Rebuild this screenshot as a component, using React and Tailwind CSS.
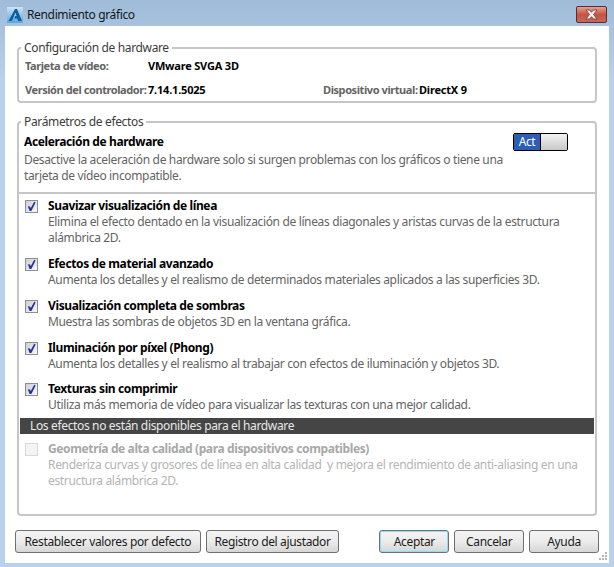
const Check = ({ disabled }) => (
  <div className={`w-[13px] h-[13px] shrink-0 border flex items-center justify-center ${disabled ? "border-[#d8d8d8] bg-[#f4f4f4]" : "border-[#8e8f8f] bg-gradient-to-br from-[#cfcfd4] to-[#f8f8f8]"}`}>
    {!disabled && (
      <svg width="11" height="11" viewBox="0 0 11 11">
        <path d="M1.8 5.2 L4 5.6 L4.8 7 L8.2 0.8 L9.6 1.4 L5.4 10 L3.6 10 Z" fill="#2a3496" />
      </svg>
    )}
  </div>
);

const Effect = ({ title, children, disabled, className = "" }) => (
  <div className={`flex ${className}`}>
    <div className="w-[29px] pl-[6px] pt-[2px] shrink-0">
      <Check disabled={disabled} />
    </div>
    <div>
      <div className={`font-bold h-[16px] leading-[16px] tracking-[-0.38px] ${disabled ? "text-[#a8a8a8]" : "text-black"}`}>{title}</div>
      <div className={`leading-[16px] ${disabled ? "text-[#b4b4b4]" : "text-[#646464]"}`}>{children}</div>
    </div>
  </div>
);

const Btn = ({ children, className = "" }) => (
  <button className={`h-[23px] rounded-[3px] border border-[#707070] bg-gradient-to-b from-[#f4f4f4] via-[#ebebeb] to-[#d6d6d6] text-[#1c1c1c] text-center whitespace-nowrap ${className}`}>
    {children}
  </button>
);

export default function App() {
  return (
    <div className="relative w-[614px] h-[567px] bg-[#b9d1ea] bg-gradient-to-b from-[#9fbbd8] from-0% to-[#b9d1ea] to-[14%] flex flex-col text-[12px] overflow-hidden font-['Noto_Sans','Open_Sans',sans-serif] tracking-[-0.35px]">
      <div className="h-[26px] shrink-0 flex items-center relative pl-[7px]">
        <svg width="16" height="16" viewBox="0 0 16 16" className="shrink-0 mt-[4px]">
          <defs>
            <linearGradient id="ic" x1="0" y1="0" x2="0" y2="1">
              <stop offset="0" stopColor="#cfe3f3" />
              <stop offset="1" stopColor="#5aa6dc" />
            </linearGradient>
          </defs>
          <rect width="16" height="16" fill="url(#ic)" />
          <path d="M8 2 L10 2 L15 14 L11 14 L10.3 11.5 L7.4 11.5 L8.2 9 L9.6 9 L8.4 5.5 L5 14 L1.5 14 Z" fill="#0f5f9e" />
        </svg>
        <span className="ml-[4px] mt-[3px] text-[#101820]">Rendimiento gráfico</span>
        <div className="absolute left-[576px] top-[6px] w-[31px] h-[17px] rounded-[2px] border border-[#5e2a2e] bg-gradient-to-b from-[#dfa094] via-[#c8533f] to-[#bf6a5e] flex items-center justify-center">
          <svg width="15" height="11" viewBox="0 0 15 11">
            <path d="M2 1 L5.5 1 L7.5 3.3 L9.5 1 L13 1 L9.5 5.5 L13 10 L9.5 10 L7.5 7.7 L5.5 10 L2 10 L5.5 5.5 Z" fill="#f1f1f1" stroke="#6b3a38" strokeWidth="0.8" />
          </svg>
        </div>
      </div>

      <div className="w-[604px] h-[537px] ml-[5px] bg-white flex flex-col px-[12px] shrink-0">
        <fieldset className="w-[580px] h-[63px] mt-[14px] border-2 border-[#c6c6c6] rounded-[4px] shrink-0">
          <legend className="ml-[2px] px-[3px] text-[#3c3c3c] leading-[16px]">Configuración de hardware</legend>
          <div className="flex font-bold text-[#646464] text-[11px] h-[16px] leading-[16px] mt-[2px] pl-[6px] whitespace-nowrap tracking-[-0.2px]">
            <span className="w-[123px] tracking-[-0.42px]">Tarjeta de vídeo:</span>
            <span className="text-black">VMware SVGA 3D</span>
          </div>
          <div className="flex font-bold text-[#646464] text-[11px] h-[16px] leading-[16px] mt-[8px] pl-[6px] whitespace-nowrap tracking-[-0.2px]">
            <span className="w-[123px] tracking-[-0.42px]">Versión del controlador:</span>
            <span className="text-black w-[175px]">7.14.1.5025</span>
            <span className="w-[96px] tracking-[-0.42px]">Dispositivo virtual:</span>
            <span className="text-black">DirectX 9</span>
          </div>
        </fieldset>

        <fieldset className="w-[580px] h-[402px] mt-[11px] border-2 border-[#c6c6c6] rounded-[4px] shrink-0">
          <legend className="ml-[2px] px-[3px] text-[#3c3c3c] leading-[16px]">Parámetros de efectos</legend>
          <div className="px-[5px] pt-[4px] h-[64px] border-b-2 border-[#c6c6c6] relative">
            <div className="font-bold text-black leading-[16px] tracking-[-0.38px]">Aceleración de hardware</div>
            <div className="text-[#646464] leading-[16px] mt-[2px] w-[490px]">
              Desactive la aceleración de hardware solo si surgen problemas con los gráficos o tiene una tarjeta de vídeo incompatible.
            </div>
            <div className="absolute left-[494px] top-[3px] w-[55px] h-[18px] rounded-[2px] border border-black flex overflow-hidden">
              <div className="w-[27px] bg-[#2c5fb4] text-white text-center leading-[16px] border-r border-black">Act</div>
              <div className="flex-1 bg-gradient-to-b from-[#f2f2f2] to-[#c8c8c8]" />
            </div>
          </div>
          <Effect title="Suavizar visualización de línea" className="mt-[4px]">
            Elimina el efecto dentado en la visualización de líneas diagonales y aristas curvas de la estructura<br />alámbrica 2D.
          </Effect>
          <Effect title="Efectos de material avanzado" className="mt-[10px]">
            Aumenta los detalles y el realismo de determinados materiales aplicados a las superficies 3D.
          </Effect>
          <Effect title="Visualización completa de sombras" className="mt-[10px]">
            Muestra las sombras de objetos 3D en la ventana gráfica.
          </Effect>
          <Effect title="Iluminación por píxel (Phong)" className="mt-[10px]">
            Aumenta los detalles y el realismo al trabajar con efectos de iluminación y objetos 3D.
          </Effect>
          <Effect title="Texturas sin comprimir" className="mt-[9px]">
            Utiliza más memoria de vídeo para visualizar las texturas con una mejor calidad.
          </Effect>
          <div className="h-[16px] bg-[#454545] text-[#e8e8e8] leading-[16px] pl-[10px] mt-[5px] mx-[1px]">
            Los efectos no están disponibles para el hardware
          </div>
          <Effect title="Geometría de alta calidad (para dispositivos compatibles)" disabled className="mt-[7px]">
            <span className="tracking-[-0.32px]">Renderiza curvas y grosores de línea en alta calidad{"\u00a0"} y mejora el rendimiento de anti-aliasing en una</span><br />estructura alámbrica 2D.
          </Effect>
        </fieldset>

        <div className="flex mt-[14px] -ml-[2px] w-[584px]">
          <Btn className="w-[186px]">Restablecer valores por defecto</Btn>
          <Btn className="w-[134px] ml-[5px]">Registro del ajustador</Btn>
          <Btn className="w-[70px] ml-[40px] border-[#2b8fc0] shadow-[inset_0_0_0_1px_#8fdcf5]">Aceptar</Btn>
          <Btn className="w-[70px] ml-[5px]">Cancelar</Btn>
          <Btn className="w-[70px] ml-[5px]">Ayuda</Btn>
        </div>
      </div>

      <svg width="10" height="10" viewBox="0 0 10 10" className="absolute left-[598px] top-[551px]">
        <g fill="#b4b4b4">
          <rect x="7" y="1" width="2" height="2" />
          <rect x="4" y="4" width="2" height="2" />
          <rect x="7" y="4" width="2" height="2" />
          <rect x="1" y="7" width="2" height="2" />
          <rect x="4" y="7" width="2" height="2" />
          <rect x="7" y="7" width="2" height="2" />
        </g>
      </svg>
    </div>
  );
}
